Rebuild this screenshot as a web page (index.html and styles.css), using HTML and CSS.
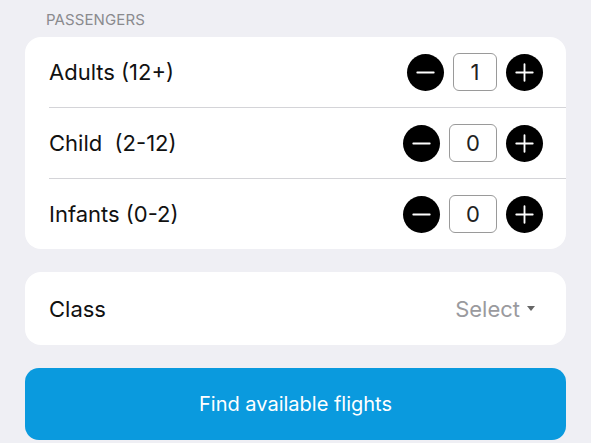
FILE: index.html
```html
<!DOCTYPE html>
<html lang="en">
<head>
    <meta charset="UTF-8">
    <meta name="viewport" content="width=device-width, initial-scale=1.0">
    <title>Passengers</title>
    <link rel="stylesheet" href="styles.css">
</head>
<body>

    <div class="Page">

        <p class="Label">Passengers</p>

        <div class="Card">

            <div class="Row">
                <span>Adults (12+)</span>
                <div class="Counter">
                    <button class="Round">
                        <svg viewBox="0 0 36 36"><path d="M10 18h16" /></svg>
                    </button>
                    <span class="Box">1</span>
                    <button class="Round">
                        <svg viewBox="0 0 36 36"><path d="M10 18h16M18 10v16" /></svg>
                    </button>
                </div>
            </div>

            <div class="Row">
                <span>Child&nbsp; (2-12)</span>
                <div class="Counter">
                    <button class="Round">
                        <svg viewBox="0 0 36 36"><path d="M10 18h16" /></svg>
                    </button>
                    <span class="Box Wide">0</span>
                    <button class="Round">
                        <svg viewBox="0 0 36 36"><path d="M10 18h16M18 10v16" /></svg>
                    </button>
                </div>
            </div>

            <div class="Row">
                <span>Infants (0-2)</span>
                <div class="Counter">
                    <button class="Round">
                        <svg viewBox="0 0 36 36"><path d="M10 18h16" /></svg>
                    </button>
                    <span class="Box Wide">0</span>
                    <button class="Round">
                        <svg viewBox="0 0 36 36"><path d="M10 18h16M18 10v16" /></svg>
                    </button>
                </div>
            </div>

        </div>

        <div class="Card">
            <div class="Row">
                <span>Class</span>
                <span class="Select">Select <i class="Caret"></i></span>
            </div>
        </div>

        <button class="Find">Find available flights</button>

    </div>

</body>
</html>
```

FILE: styles.css
```css
* {
    box-sizing: border-box;
}

body {
    margin: 0;
    background: #efeff4;
    font-family: Inter, "Noto Sans", sans-serif;
    color: #111;
}

div.Page {
    display: flex;
    flex-direction: column;
    padding: 0 25px;
}

p.Label {
    margin: 10px 0 0 21px;
    height: 27px;
    font-size: 15px;
    line-height: 20px;
    text-transform: uppercase;
    color: #8a8a8e;
    letter-spacing: 0.1px;
}

div.Card {
    background: #fff;
    border-radius: 16px;
    padding-left: 24px;
    margin-bottom: 23px;
}

div.Card div.Row {
    display: flex;
    align-items: center;
    justify-content: space-between;
    height: 71px;
    padding-right: 23px;
    font-size: 22px;
    border-bottom: 1px solid #d4d4d8;
}

div.Card div.Row:last-child {
    height: 70px;
    border-bottom: none;
}

div.Card + div.Card div.Row:last-child {
    height: 73px;
}

div.Counter {
    display: flex;
    align-items: center;
    gap: 9px;
}

button.Round {
    width: 37px;
    height: 37px;
    padding: 0;
    border: none;
    border-radius: 50%;
    background: #000;
    display: flex;
}

button.Round svg {
    width: 37px;
    height: 37px;
    fill: none;
    stroke: #fff;
    stroke-width: 1.8;
    stroke-linecap: round;
}

span.Box {
    width: 44px;
    height: 38px;
    border: 1px solid #9a9a9a;
    border-radius: 6px;
    display: flex;
    align-items: center;
    justify-content: center;
    font-size: 22px;
    color: #222;
}

span.Box.Wide {
    width: 48px;
}

span.Select {
    color: #9a9a9e;
    display: flex;
    align-items: center;
    gap: 7px;
    margin-right: 8px;
}

i.Caret {
    width: 0;
    height: 0;
    border-left: 4.5px solid transparent;
    border-right: 4.5px solid transparent;
    border-top: 5px solid #666;
}

button.Find {
    height: 72px;
    border: none;
    border-radius: 14px;
    background: #0a9ade;
    color: #fff;
    font-family: Inter, "Noto Sans", sans-serif;
    font-size: 20px;
}
```
